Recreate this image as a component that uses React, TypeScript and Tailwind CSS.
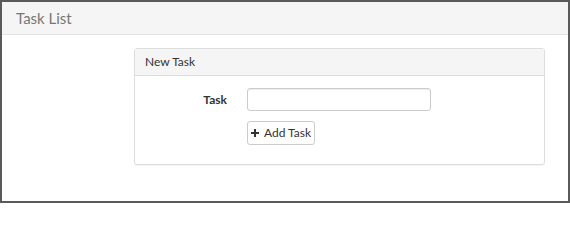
export default function App() {
  return (
    <div
      className="w-[570px] h-[204px] bg-white"
      style={{ fontFamily: "Lato, 'Open Sans', sans-serif" }}
    >
      <div className="h-[203px] border-2 border-[#5a5a5a] bg-white">
        {/* Top bar */}
        <div className="h-[33px] bg-[#f5f5f5] border-b border-[#e3e3e3] flex items-center pl-[14px]">
          <span className="text-[15px] text-[#777]">Task List</span>
        </div>

        {/* New task panel */}
        <div className="ml-[132px] mt-[13px] w-[411px] border border-[#dddddd] rounded-[3px] shadow-[0_1px_1px_rgba(0,0,0,0.05)]">
          <div className="h-[27px] bg-[#f5f5f5] border-b border-[#dddddd] flex items-center pl-[10px]">
            <span className="text-[12px] text-[#333]">New Task</span>
          </div>
          <div className="pt-[12px] pb-[19px]">
            <div className="flex items-center">
              <label className="w-[92px] text-right text-[12px] font-bold text-[#333]">
                Task
              </label>
              <input
                type="text"
                className="ml-[20px] w-[184px] h-[23px] border border-[#cccccc] rounded-[3px] shadow-[inset_0_1px_1px_rgba(0,0,0,0.075)] outline-none"
              />
            </div>
            <div className="ml-[112px] mt-[10px]">
              <button className="h-[24px] w-[68px] flex items-center justify-center gap-[5px] border border-[#cccccc] rounded-[3px] bg-white text-[12px] text-[#333]">
                <svg width="8" height="8" viewBox="0 0 8 8">
                  <path d="M3 0h2v3h3v2H5v3H3V5H0V3h3z" fill="#333" />
                </svg>
                Add Task
              </button>
            </div>
          </div>
        </div>
      </div>
    </div>
  );
}
